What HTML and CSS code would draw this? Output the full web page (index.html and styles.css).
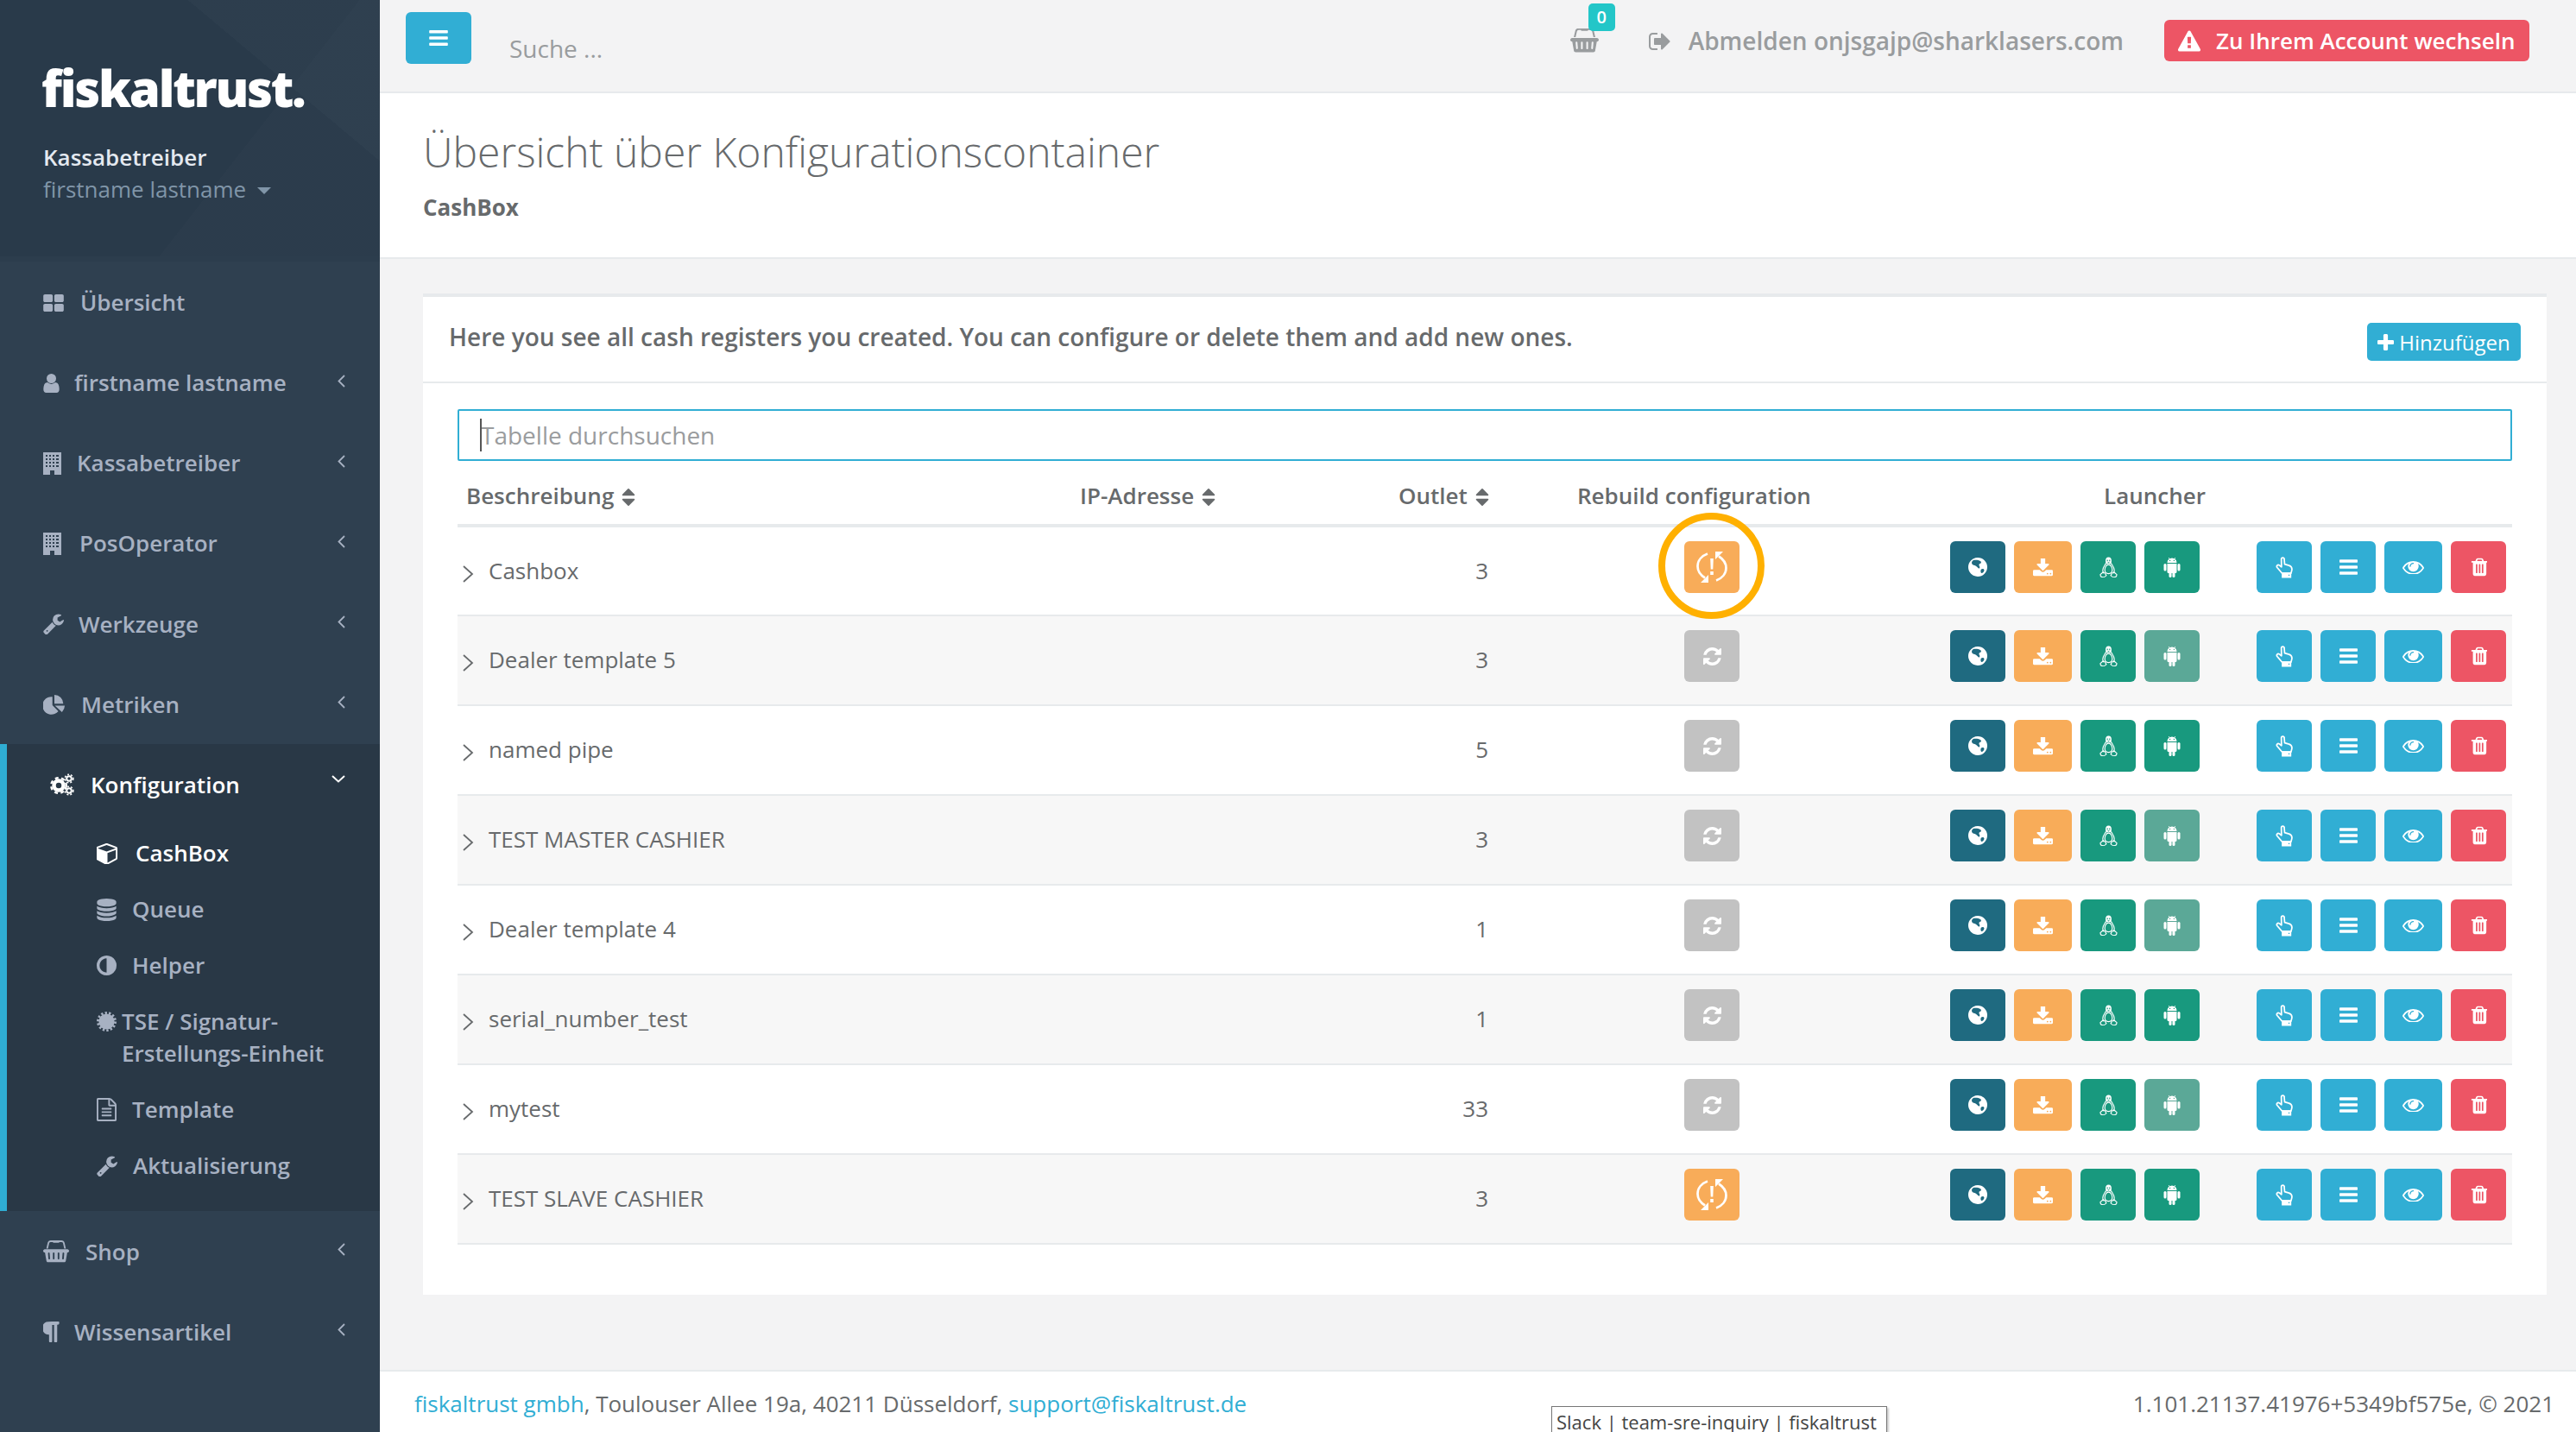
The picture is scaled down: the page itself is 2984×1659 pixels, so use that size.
FILE: index.html
```html
<!DOCTYPE html>
<html lang="de">

<head>
    <meta charset="UTF-8">
    <title>fiskaltrust Portal</title>
    <link rel="stylesheet" href="styles.css">
</head>

<body>
    <!-- icon sprite -->
    <svg class="sprite" xmlns="http://www.w3.org/2000/svg">
        <symbol id="i-th" viewBox="64 128 1664 1408"><path d="M832 1024v384q0 52-38 90t-90 38h-512q-52 0-90-38t-38-90v-384q0-52 38-90t90-38h512q52 0 90 38t38 90zm0-768v384q0 52-38 90t-90 38h-512q-52 0-90-38t-38-90v-384q0-52 38-90t90-38h512q52 0 90 38t38 90zm896 768v384q0 52-38 90t-90 38h-512q-52 0-90-38t-38-90v-384q0-52 38-90t90-38h512q52 0 90 38t38 90zm0-768v384q0 52-38 90t-90 38h-512q-52 0-90-38t-38-90v-384q0-52 38-90t90-38h512q52 0 90 38t38 90z"/></symbol>
        <symbol id="i-user" viewBox="256 128 1280 1536"><path d="M1536 1399q0 109-62.500 187t-150.500 78h-854q-88 0-150.500-78t-62.500-187q0-85 8.500-160.500t31.500-152 58.500-131 94-89 134.500-34.500q131 128 313 128t313-128q76 0 134.500 34.500t94 89 58.500 131 31.500 152 8.500 160.500zm-256-887q0 159-112.500 271.500t-271.500 112.500-271.500-112.500-112.500-271.500 112.500-271.500 271.500-112.500 271.500 112.500 112.500 271.500z"/></symbol>
        <symbol id="i-building" viewBox="0 0 21 26"><path fill-rule="evenodd" d="M0 0h21v26H0zM3 3v2h2V3zm4 0v2h2V3zm4 0v2h2V3zm4 0v2h3V3zM3 7v2h2V7zm4 0v2h2V7zm4 0v2h2V7zm4 0v2h3V7zM3 11v2h2v-2zm4 0v2h2v-2zm4 0v2h2v-2zm4 0v2h3v-2zM3 15v2h2v-2zm4 0v2h2v-2zm4 0v2h2v-2zm4 0v2h3v-2zM8 21v5h5v-5z"/></symbol>
        <symbol id="i-wrench" viewBox="64 128 1664 1600"><path d="M448 1472q0-26-19-45t-45-19-45 19-19 45 19 45 45 19 45-19 19-45zm644-420l-682 682q-37 37-90 37-52 0-91-37l-106-108q-38-36-38-90 0-53 38-91l681-681q39 98 114.500 173.500t173.500 114.500zm634-435q0 39-23 106-47 134-164.500 217.500t-258.500 83.500q-185 0-316.500-131.500t-131.500-316.500 131.500-316.500 316.500-131.500q58 0 121.500 16.500t107.500 46.500q16 11 16 28t-16 28l-293 169v224l193 107q5-3 79-48.500t135.500-81 70.500-35.500q15 0 23.500 10t8.500 25z"/></symbol>
        <symbol id="i-pie" viewBox="0 0 25 23"><path d="M10.700 2.300v9.700l6.900 6.900A10.300 10.300 0 1 1 10.700 2.300zM13 0a10.300 10.300 0 0 1 10.300 10.300H13zM13.600 12.600H25a10.300 10.300 0 0 1-3.200 7.300z"/></symbol>
        <symbol id="i-cogs" viewBox="0 0 28 26">
            <circle cx="10" cy="14" r="5.500" fill="none" stroke="currentColor" stroke-width="4.500"/>
            <circle cx="10" cy="14" r="8.800" fill="none" stroke="currentColor" stroke-width="2.400" stroke-dasharray="4 3.380"/>
            <circle cx="22" cy="6" r="2.800" fill="none" stroke="currentColor" stroke-width="2"/>
            <circle cx="22" cy="6" r="4.800" fill="none" stroke="currentColor" stroke-width="1.600" stroke-dasharray="2 2.020"/>
            <circle cx="22" cy="20" r="2.800" fill="none" stroke="currentColor" stroke-width="2"/>
            <circle cx="22" cy="20" r="4.800" fill="none" stroke="currentColor" stroke-width="1.600" stroke-dasharray="2 2.020"/>
        </symbol>
        <symbol id="i-cube" viewBox="64 64 1664 1664"><path d="M896 1629l640-349v-636l-640 233v752zm-64-865l698-254-698-254-698 254zm832-252v768q0 35-18 65t-49 47l-704 384q-28 16-61 16t-61-16l-704-384q-31-17-49-47t-18-65v-768q0-40 23-73t61-47l704-256q22-8 44-8t44 8l704 256q38 14 61 47t23 73z"/></symbol>
        <symbol id="i-db" viewBox="128 0 1536 1792"><path d="M896 768q237 0 443-43t325-127v170q0 69-103 128t-280 93.500-385 34.500-385-34.500-280-93.500-103-128v-170q119 84 325 127t443 43zm0 768q237 0 443-43t325-127v170q0 69-103 128t-280 93.500-385 34.500-385-34.500-280-93.500-103-128v-170q119 84 325 127t443 43zm0-384q237 0 443-43t325-127v170q0 69-103 128t-280 93.500-385 34.500-385-34.500-280-93.500-103-128v-170q119 84 325 127t443 43zm0-1152q208 0 385 34.500t280 93.500 103 128v128q0 69-103 128t-280 93.500-385 34.500-385-34.500-280-93.500-103-128v-128q0-69 103-128t280-93.500 385-34.500z"/></symbol>
        <symbol id="i-adjust" viewBox="0 0 1536 1536"><path d="M768 1312v-1088q-148 0-273 73t-198 198-73 273 73 273 198 198 273 73zm768-544q0 209-103 385.500t-279.500 279.500-385.500 103-385.500-103-279.500-279.500-103-385.500 103-385.500 279.500-279.500 385.500-103 385.500 103 279.500 279.500 103 385.500z"/></symbol>
        <symbol id="i-cert" viewBox="0 0 24 24">
            <circle cx="12" cy="12" r="9.500"/>
            <circle cx="12" cy="12" r="10.500" fill="none" stroke="currentColor" stroke-width="3" stroke-dasharray="2.500 2.210"/>
        </symbol>
        <symbol id="i-file" viewBox="128 0 1536 1792"><path d="M1596 380q28 28 48 76t20 88v1152q0 40-28 68t-68 28h-1344q-40 0-68-28t-28-68v-1600q0-40 28-68t68-28h896q40 0 88 20t76 48zm-444-244v376h376q-10-29-22-41l-313-313q-12-12-41-22zm384 1528v-1024h-416q-40 0-68-28t-28-68v-416h-768v1536h1280zm-1024-864q0-14 9-23t23-9h704q14 0 23 9t9 23v64q0 14-9 23t-23 9h-704q-14 0-23-9t-9-23v-64zm736 224q14 0 23 9t9 23v64q0 14-9 23t-23 9h-704q-14 0-23-9t-9-23v-64q0-14 9-23t23-9h704zm0 256q14 0 23 9t9 23v64q0 14-9 23t-23 9h-704q-14 0-23-9t-9-23v-64q0-14 9-23t23-9h704z"/></symbol>
        <symbol id="i-basket" viewBox="0 100 2048 1700"><path d="M1920 768q53 0 90.500 37.500t37.500 90.500-37.500 90.500-90.500 37.500h-15l-115 662q-8 46-44 76t-82 30h-1280q-46 0-82-30t-44-76l-115-662h-15q-53 0-90.500-37.500t-37.500-90.500 37.500-90.500 90.500-37.500h1792zm-1435 800q26-2 43.500-22.500t15.500-46.500l-32-416q-2-26-22.500-43.500t-46.500-15.500-43.500 22.500-15.500 46.500l32 416q2 25 20.500 42t43.500 17h5zm411-64v-416q0-26-19-45t-45-19-45 19-19 45v416q0 26 19 45t45 19 45-19 19-45zm384 0v-416q0-26-19-45t-45-19-45 19-19 45v416q0 26 19 45t45 19 45-19 19-45zm352 5l32-416q2-26-15.500-46.500t-43.500-22.500-46.500 15.500-22.500 43.500l-32 416q-2 26 15.500 46.500t43.500 22.500h5q25 0 43.500-17t20.500-42zm-1156-1217l-93 412h-132l101-441q19-88 89-143.500t160-55.500h167q0-26 19-45t45-19h384q26 0 45 19t19 45h167q90 0 160 55.500t89 143.500l101 441h-132l-93-412q-11-44-45.500-72t-79.500-28h-167q0 26-19 45t-45 19h-384q-26 0-45-19t-19-45h-167q-45 0-79.500 28t-45.500 72z"/></symbol>
        <symbol id="i-para" viewBox="370 128 1164 1536"><path d="M1534 189v73q0 29-18.500 61t-42.500 32q-50 0-54 1-26 6-32 31-3 11-3 64v1152q0 25-18 43t-43 18h-108q-25 0-43-18t-18-43v-1218h-143v1218q0 25-17.500 43t-43.500 18h-108q-26 0-43.500-18t-17.500-43v-496q-147-12-245-59-126-58-192-179-64-117-64-259 0-166 88-286 88-118 209-159 111-37 417-37h479q25 0 43 18t18 43z"/></symbol>
        <symbol id="i-bars" viewBox="128 256 1536 1280"><path d="M1664 1344v128q0 26-19 45t-45 19h-1408q-26 0-45-19t-19-45v-128q0-26 19-45t45-19h1408q26 0 45 19t19 45zm0-512v128q0 26-19 45t-45 19h-1408q-26 0-45-19t-19-45v-128q0-26 19-45t45-19h1408q26 0 45 19t19 45zm0-512v128q0 26-19 45t-45 19h-1408q-26 0-45-19t-19-45v-128q0-26 19-45t45-19h1408q26 0 45 19t19 45z"/></symbol>
        <symbol id="i-plus" viewBox="192 128 1408 1408"><path d="M1600 736v192q0 40-28 68t-68 28h-416v416q0 40-28 68t-68 28h-192q-40 0-68-28t-28-68v-416h-416q-40 0-68-28t-28-68v-192q0-40 28-68t68-28h416v-416q0-40 28-68t68-28h192q40 0 68 28t28 68v416h416q40 0 68 28t28 68z"/></symbol>
        <symbol id="i-trash" viewBox="128 128 1408 1536"><path d="M704 1376v-704q0-14-9-23t-23-9h-64q-14 0-23 9t-9 23v704q0 14 9 23t23 9h64q14 0 23-9t9-23zm256 0v-704q0-14-9-23t-23-9h-64q-14 0-23 9t-9 23v704q0 14 9 23t23 9h64q14 0 23-9t9-23zm256 0v-704q0-14-9-23t-23-9h-64q-14 0-23 9t-9 23v704q0 14 9 23t23 9h64q14 0 23-9t9-23zm-544-992h448l-48-117q-7-9-17-11h-317q-10 2-17 11zm928 32v64q0 14-9 23t-23 9h-96v948q0 83-47 143.500t-113 60.500h-832q-66 0-113-58.500t-47-141.500v-952h-96q-14 0-23-9t-9-23v-64q0-14 9-23t23-9h309l70-167q15-37 54-63t79-26h320q40 0 79 26t54 63l70 167h309q14 0 23 9t9 23z"/></symbol>
        <symbol id="i-refresh" viewBox="128 128 1536 1536"><path d="M1639 1056q0 5-1 7-64 268-268 434.500t-478 166.500q-146 0-282.500-55t-243.500-157l-129 129q-19 19-45 19t-45-19-19-45v-448q0-26 19-45t45-19h448q26 0 45 19t19 45-19 45l-137 137q71 66 161 102t187 36q134 0 250-65t186-179q11-17 53-117 8-23 30-23h192q13 0 22.500 9.500t9.500 22.500zm25-800v448q0 26-19 45t-45 19h-448q-26 0-45-19t-19-45 19-45l138-138q-148-137-349-137-134 0-250 65t-186 179q-11 17-53 117-8 23-30 23h-199q-13 0-22.500-9.500t-9.500-22.500v-7q65-268 270-434.500t480-166.500q146 0 284 55.500t245 156.500l130-129q19-19 45-19t45 19 19 45z"/></symbol>
        <symbol id="i-eye" viewBox="0 320 1792 1152"><path d="M1664 960q-152-236-381-353 61 104 61 225 0 185-131.500 316.500t-316.500 131.500-316.500-131.500-131.500-316.500q0-121 61-225-229 117-381 353 133 205 333.500 326.500t434.500 121.500 434.500-121.500 333.500-326.500zm-720-384q0-20-14-34t-34-14q-125 0-214.500 89.500t-89.500 214.500q0 20 14 34t34 14 34-14 14-34q0-86 61-147t147-61q20 0 34-14t14-34zm848 384q0 34-20 69-140 230-376.500 368.500t-499.500 138.500-499.500-139-376.500-368q-20-35-20-69t20-69q140-229 376.500-368t499.500-139 499.500 139 376.500 368q20 35 20 69z"/></symbol>
        <symbol id="i-download" viewBox="64 128 1664 1408"><path d="M1344 1344q0-26-19-45t-45-19-45 19-19 45 19 45 45 19 45-19 19-45zm256 0q0-26-19-45t-45-19-45 19-19 45 19 45 45 19 45-19 19-45zm128-224v320q0 40-28 68t-68 28h-1472q-40 0-68-28t-28-68v-320q0-40 28-68t68-28h465l135 136q58 56 136 56t136-56l136-136h464q40 0 68 28t28 68zm-325-569q17 41-14 70l-448 448q-18 19-45 19t-45-19l-448-448q-31-29-14-70 17-39 59-39h256v-448q0-26 19-45t45-19h256q26 0 45 19t19 45v448h256q42 0 59 39z"/></symbol>
        <symbol id="i-warning" viewBox="0 0 1792 1664"><path d="M1024 1375v-190q0-14-9.500-23.500t-22.500-9.500h-192q-13 0-22.500 9.500t-9.500 23.500v190q0 14 9.500 23.500t22.500 9.500h192q13 0 22.500-9.500t9.500-23.500zm-2-374l18-459q0-12-10-19-13-11-24-11h-220q-11 0-24 11-10 7-10 21l17 457q0 10 10 16.500t24 6.500h185q14 0 23.500-6.500t10.500-16.500zm-14-934l768 1408q35 63-2 126-17 29-46.500 46t-63.500 17h-1536q-34 0-63.500-17t-46.500-46q-37-63-2-126l768-1408q17-31 47-49t65-18 65 18 47 49z"/></symbol>
        <symbol id="i-sort" viewBox="384 192 1024 1408"><path d="M1408 1088q0 26-19 45l-448 448q-19 19-45 19t-45-19l-448-448q-19-19-19-45t19-45 45-19h896q26 0 45 19t19 45zm0-384q0 26-19 45t-45 19h-896q-26 0-45-19t-19-45 19-45l448-448q19-19 45-19t45 19l448 448q19 19 19 45z"/></symbol>
        <symbol id="i-signout" viewBox="64 192 1600 1408"><path d="M704 1440q0 4 1 20t.5 26.500-3 23.500-10 19.500-20.500 6.500h-320q-119 0-203.500-84.500t-84.500-203.500v-704q0-119 84.500-203.500t203.500-84.500h320q13 0 22.500 9.500t9.500 22.500q0 4 1 20t.5 26.500-3 23.500-10 19.500-20.500 6.500h-320q-66 0-113 47t-47 113v704q0 66 47 113t113 47h312l11.500 1 11.500 3 8 5.500 7 9 2 13.500zm928-544q0 26-19 45l-544 544q-19 19-45 19t-45-19-19-45v-288h-448q-26 0-45-19t-19-45v-384q0-26 19-45t45-19h448v-288q0-26 19-45t45-19 45 19l544 544q19 19 19 45z"/></symbol>
        <symbol id="i-globe" viewBox="0 0 22 22"><path fill-rule="evenodd" d="M11 0a11 11 0 1 0 0 22 11 11 0 0 0 0-22zM6 3c2-.6 6-.4 8 1 1.500 1 1 2.500-.5 3-1 .4-1.500 1.500-.5 3 .8 1.300 0 3-1 2.500-1-.8-2.500-2.500-4.500-3.500C6 9 4 8 4 6c0-1.500 1-2.500 2-3zm9 10.500c1.500-1 3.500-.5 3.500 1 0 1.800-2 3.500-3 3.500-1.200 0-1.500-3.500-.5-4.500z"/></symbol>
        <symbol id="i-linux" viewBox="0 0 22 26">
            <path fill-rule="evenodd" d="M11 .5c-2.600 0-3.600 2-3.600 4.300 0 1.500.3 2.500.3 3.700h6.600c0-1.200.3-2.200.3-3.700C14.600 2.500 13.600.5 11 .5zM9 3.500h1.200v1.800H9zM11.800 3.500H13v1.800h-1.200zM9.500 6.500h3L11 7.800z"/>
            <g fill="none" stroke="currentColor" stroke-width="1.200">
                <path d="M7.700 8C7 10 4 12.500 4 16.500c0 1.500.5 2.500 1 3.500M14.300 8c.7 2 3.700 4.500 3.700 8.500 0 1.500-.5 2.500-1 3.500"/>
                <path d="M11 9.500c-3 0-4.500 3.500-4.500 6.500 0 2.500 1.500 4.500 4.500 4.500s4.500-2 4.500-4.500c0-3-1.500-6.500-4.500-6.500z"/>
                <path d="M1 21.500l3.500-3c1.500.5 3 2 3.800 4.200-1.500 2-4.500 2.500-6.800 1zM21 21.500l-3.500-3c-1.500.5-3 2-3.800 4.200 1.500 2 4.500 2.500 6.800 1z"/>
            </g>
        </symbol>
        <symbol id="i-android" viewBox="0 0 20 24">
            <path fill-rule="evenodd" d="M4.500 7a5.500 5.500 0 0 1 11 0zM7 3.700v1.200h1.200V3.700zm4.800 0v1.200H13V3.700z"/>
            <path d="M6.200 1l1.600 2.500M13.800 1l-1.600 2.500" stroke="currentColor" stroke-width=".8"/>
            <path d="M4.500 8h11v9.500a1.500 1.500 0 0 1-1.500 1.500H6a1.500 1.500 0 0 1-1.500-1.500z"/>
            <rect x="0.500" y="8" width="3" height="8.500" rx="1.500"/>
            <rect x="16.500" y="8" width="3" height="8.500" rx="1.500"/>
            <rect x="6.500" y="17" width="3" height="7" rx="1.500"/>
            <rect x="10.500" y="17" width="3" height="7" rx="1.500"/>
        </symbol>
        <symbol id="i-hand" viewBox="0 0 21 26">
            <path fill="none" stroke="currentColor" stroke-width="1.800" stroke-linejoin="round" d="M6.500 3c0-2.600 3.500-2.600 3.500 0l.5 6 5.300 1.500c2.700.9 3.500 2.500 3.500 4.500 0 1.500-.6 3-1.200 5H7.500L1.500 13c-1.400-1.800.6-4 2.400-2.800l2.800 2z"/>
            <path fill-rule="evenodd" d="M7 19h11.500v6.500H7zM15 21.500v1.500h1.500v-1.500z"/>
        </symbol>
        <symbol id="i-sync-alert" viewBox="0 0 36 36">
            <path fill="none" stroke="currentColor" stroke-width="2.700" d="M13 2.500C6 5 1.500 10.500 1.500 17c0 5 3 10 8.500 13.500M23 33.500C30 31 34.500 25.500 34.500 19c0-5-3-10-8.500-13.500"/>
            <path d="M5 36h9v-9zM31 0h-9v9z"/>
            <path d="M16.200 8h3.600l-.5 12.500h-2.600zM16.200 23h3.600v4h-3.600z"/>
        </symbol>
    </svg>

    <div class="app">
        <aside class="sidebar">
            <div class="nav-header">
                <div class="logo">fiskaltrust.</div>
                <div class="role">Kassabetreiber</div>
                <div class="account">firstname lastname <span class="caret"></span></div>
            </div>

            <ul class="nav">
                <li class="nav-item"><svg width="24" height="20"><use href="#i-th"/></svg><span>Übersicht</span></li>
                <li class="nav-item"><svg class="tight" width="19" height="22"><use href="#i-user"/></svg><span>firstname lastname</span><svg class="chev" viewBox="0 0 9 15"><path d="M8 1L1.500 7.500 8 14"/></svg></li>
                <li class="nav-item"><svg class="snug" width="21" height="26"><use href="#i-building"/></svg><span>Kassabetreiber</span><svg class="chev" viewBox="0 0 9 15"><path d="M8 1L1.500 7.500 8 14"/></svg></li>
                <li class="nav-item"><svg class="wide" width="21" height="26"><use href="#i-building"/></svg><span>PosOperator</span><svg class="chev" viewBox="0 0 9 15"><path d="M8 1L1.500 7.500 8 14"/></svg></li>
                <li class="nav-item"><svg class="tight" width="24" height="24"><use href="#i-wrench"/></svg><span>Werkzeuge</span><svg class="chev" viewBox="0 0 9 15"><path d="M8 1L1.500 7.500 8 14"/></svg></li>
                <li class="nav-item"><svg width="25" height="23"><use href="#i-pie"/></svg><span>Metriken</span><svg class="chev" viewBox="0 0 9 15"><path d="M8 1L1.500 7.500 8 14"/></svg></li>

                <li class="nav-group">
                    <div class="nav-item active"><svg width="28" height="26"><use href="#i-cogs"/></svg><span>Konfiguration</span><svg class="chev-down" viewBox="0 0 16 9"><path d="M1 1l7 6.500L15 1"/></svg></div>
                    <ul class="subnav">
                        <li class="sub-item active"><svg width="25" height="25"><use href="#i-cube"/></svg><span>CashBox</span></li>
                        <li class="sub-item"><svg width="23" height="26"><use href="#i-db"/></svg><span>Queue</span></li>
                        <li class="sub-item"><svg width="23" height="23"><use href="#i-adjust"/></svg><span>Helper</span></li>
                        <li class="sub-item multi"><svg class="cert" width="23" height="23"><use href="#i-cert"/></svg><span>TSE / Signatur-<br>Erstellungs-Einheit</span></li>
                        <li class="sub-item"><svg width="23" height="27"><use href="#i-file"/></svg><span>Template</span></li>
                        <li class="sub-item"><svg width="24" height="24"><use href="#i-wrench"/></svg><span>Aktualisierung</span></li>
                    </ul>
                </li>

                <li class="nav-item"><svg width="30" height="26"><use href="#i-basket"/></svg><span>Shop</span><svg class="chev" viewBox="0 0 9 15"><path d="M8 1L1.500 7.500 8 14"/></svg></li>
                <li class="nav-item"><svg class="tight" width="19" height="24"><use href="#i-para"/></svg><span>Wissensartikel</span><svg class="chev" viewBox="0 0 9 15"><path d="M8 1L1.500 7.500 8 14"/></svg></li>
            </ul>
        </aside>

        <div class="main">
            <header class="topbar">
                <div class="topbar-left">
                    <button class="menu-btn"><svg width="22" height="18"><use href="#i-bars"/></svg></button>
                    <span class="search">Suche ...</span>
                </div>
                <div class="topbar-right">
                    <div class="cart">
                        <svg width="33" height="28"><use href="#i-basket"/></svg>
                        <span class="cart-badge">0</span>
                    </div>
                    <span class="logout"><svg width="25" height="22"><use href="#i-signout"/></svg>Abmelden onjsgajp@sharklasers.com</span>
                    <button class="switch-btn"><svg width="26" height="25"><use href="#i-warning"/></svg>Zu Ihrem Account wechseln</button>
                </div>
            </header>

            <section class="page-title">
                <h2>Übersicht über Konfigurationscontainer</h2>
                <strong>CashBox</strong>
            </section>

            <div class="content">
                <div class="box">
                    <div class="box-title">
                        <span>Here you see all cash registers you created. You can configure or delete them and add new ones.</span>
                        <button class="add-btn"><svg width="19" height="19"><use href="#i-plus"/></svg>Hinzufügen</button>
                    </div>
                    <div class="box-body">
                        <div class="filter">
                            <input type="text" placeholder="Tabelle durchsuchen">
                            <span class="text-caret"></span>
                        </div>

                        <table class="grid">
                            <colgroup>
                                <col class="col-name"><col class="col-ip"><col class="col-outlet"><col class="col-rebuild"><col class="col-launcher"><col class="col-actions">
                            </colgroup>
                            <thead>
                                <tr>
                                    <th>Beschreibung <svg class="sort"><use href="#i-sort"/></svg></th>
                                    <th>IP-Adresse <svg class="sort"><use href="#i-sort"/></svg></th>
                                    <th class="th-outlet">Outlet <svg class="sort"><use href="#i-sort"/></svg></th>
                                    <th class="th-rebuild">Rebuild configuration</th>
                                    <th class="th-launcher">Launcher</th>
                                    <th></th>
                                </tr>
                            </thead>
                            <tbody id="rows"></tbody>
                        </table>
                    </div>
                </div>
            </div>

            <footer class="footer">
                <span><a>fiskaltrust gmbh</a>, Toulouser Allee 19a, 40211 Düsseldorf, <a>support@fiskaltrust.de</a></span>
                <span>1.101.21137.41976+5349bf575e, © 2021</span>
            </footer>
        </div>
    </div>

    <div class="tooltip">Slack | team-sre-inquiry | fiskaltrust</div>

    <script>
        // name, outlet, needs rebuild, android enabled
        var cashboxes = [
            ["Cashbox", 3, true, true],
            ["Dealer template 5", 3, false, false],
            ["named pipe", 5, false, true],
            ["TEST MASTER CASHIER", 3, false, false],
            ["Dealer template 4", 1, false, false],
            ["serial_number_test", 1, false, true],
            ["mytest", 33, false, false],
            ["TEST SLAVE CASHIER", 3, true, true]
        ];

        function icon(name, w, h) {
            return '<svg width="' + w + '" height="' + h + '"><use href="#' + name + '"/></svg>';
        }

        var html = "";
        for (var i = 0; i < cashboxes.length; i++) {
            var c = cashboxes[i];
            html += '<tr>';
            html += '<td class="td-name"><svg class="row-chev" viewBox="0 0 14 20"><path d="M2 1l10 9-10 9"/></svg>' + c[0] + '</td>';
            html += '<td></td>';
            html += '<td class="td-outlet">' + c[1] + '</td>';
            html += '<td class="td-rebuild">';
            if (c[2]) {
                html += '<button class="btn btn-rebuild alert">' + icon("i-sync-alert", 36, 36) + '</button>';
            } else {
                html += '<button class="btn btn-rebuild idle">' + icon("i-refresh", 21, 21) + '</button>';
            }
            html += '</td>';
            html += '<td class="td-launcher"><div class="btn-row">';
            html += '<button class="btn teal">' + icon("i-globe", 22, 22) + '</button>';
            html += '<button class="btn orange wide-btn">' + icon("i-download", 23, 21) + '</button>';
            html += '<button class="btn green">' + icon("i-linux", 21, 25) + '</button>';
            html += '<button class="btn green' + (c[3] ? '' : ' faded') + '">' + icon("i-android", 20, 24) + '</button>';
            html += '</div></td>';
            html += '<td class="td-actions"><div class="btn-row">';
            html += '<button class="btn blue">' + icon("i-hand", 21, 25) + '</button>';
            html += '<button class="btn blue">' + icon("i-bars", 21, 18) + '</button>';
            html += '<button class="btn blue wide-btn">' + icon("i-eye", 25, 16) + '</button>';
            html += '<button class="btn red">' + icon("i-trash", 19, 22) + '</button>';
            html += '</div></td>';
            html += '</tr>';
        }
        document.getElementById("rows").innerHTML = html;
    </script>
    <div class="ring"></div>
</body>

</html>
```

FILE: styles.css
```css
* {
    box-sizing: border-box;
}

html, body {
    margin: 0;
    height: 100%;
    overflow: hidden;
}

body {
    font-family: "Open Sans", "Liberation Sans", sans-serif;
    font-size: 26px;
    line-height: 37px;
    color: #676a6c;
    background-color: #2f4050;
}

svg {
    fill: currentColor;
    flex: none;
}

button {
    border: 0;
    font-family: inherit;
    padding: 0;
}

ul {
    list-style: none;
    margin: 0;
    padding: 0;
}

.sprite {
    display: none;
}

.app {
    display: flex;
    height: 1659px;
}

/* Sidebar */
.sidebar {
    width: 440px;
    flex: none;
    background-color: #2f4050;
}

.nav-header {
    height: 303px;
    padding: 65px 0 0 48px;
    background:
        linear-gradient(128deg, transparent 62%, rgba(255, 255, 255, 0.012) 62%),
        linear-gradient(40deg, transparent 72%, rgba(255, 255, 255, 0.018) 72%),
        #293a4a;
    border-bottom: 6px solid #2c3d4d;
}

.logo {
    font-size: 58px;
    font-weight: 800;
    line-height: 74px;
    letter-spacing: -2.300px;
    color: #ffffff;
}

.role {
    margin: 25px 0 0 2px;
    font-weight: 600;
    color: #e4e9f0;
}

.account {
    margin-left: 2px;
    color: #8095a8;
    line-height: 37px;
}

.caret {
    display: inline-block;
    margin: 0 0 4px 6px;
    border-top: 8px solid #8095a8;
    border-left: 8px solid transparent;
    border-right: 8px solid transparent;
}

.nav-item {
    display: flex;
    align-items: center;
    height: 93.140px;
    padding: 2px 40px 0 50px;
    font-weight: 600;
    color: #a7b1c2;
}

.nav-item svg:first-child {
    margin-right: 19px;
}

.nav-item svg.tight {
    margin-right: 17px;
}

.nav-item svg.snug {
    margin-right: 18px;
}

.nav-item svg.wide {
    margin-right: 21px;
}

.chev {
    width: 9px;
    height: 15px;
    margin: 0 0 5px auto;
    fill: none;
    stroke: #a7b1c2;
    stroke-width: 1.800;
}

.chev-down {
    width: 16px;
    height: 9px;
    margin: 0 0 14px auto;
    fill: none;
    stroke: #ffffff;
    stroke-width: 2;
}

.nav-group {
    height: 541px;
    background-color: #293846;
    border-left: 8px solid #2fadd3;
}

.nav-item.active {
    color: #ffffff;
}

.nav-item.active svg:first-child {
    margin-right: 19px;
}

.sub-item {
    display: flex;
    align-items: center;
    height: 65.140px;
    padding: 2px 0 0 104px;
    font-weight: 600;
    color: #a7b1c2;
}

.sub-item svg {
    margin-right: 18px;
}

.sub-item.active {
    color: #ffffff;
}

.sub-item.active svg {
    margin-right: 20px;
}

.sub-item.multi {
    height: 102px;
    align-items: flex-start;
    padding-top: 15px;
}

.sub-item svg.cert {
    margin: 7px 6px 0 0;
}

/* Main column */
.main {
    flex: 1;
    display: flex;
    flex-direction: column;
    min-width: 0;
    background-color: #f3f3f4;
}

.topbar {
    height: 108px;
    flex: none;
    display: flex;
    justify-content: space-between;
    padding: 14px 54px 0 30px;
    border-bottom: 2px solid #e7eaec;
}

.topbar-left {
    display: flex;
}

.menu-btn {
    display: flex;
    align-items: center;
    justify-content: center;
    width: 76px;
    height: 60px;
    color: #ffffff;
    background-color: #31aed4;
    border-radius: 6px;
}

.search {
    margin: 24px 0 0 44px;
    font-size: 28px;
    color: #999c9e;
}

.topbar-right {
    display: flex;
    align-items: flex-start;
}

.cart {
    position: relative;
    margin: 19px 58px 0 0;
    color: #999c9e;
}

.cart-badge {
    position: absolute;
    left: 21px;
    top: -29px;
    width: 31px;
    height: 32px;
    font-size: 20px;
    line-height: 32px;
    font-weight: 600;
    text-align: center;
    color: #ffffff;
    background-color: #23c6c8;
    border-radius: 5px;
}

.logout {
    display: flex;
    align-items: center;
    gap: 21px;
    margin: 15px 47px 0 0;
    font-size: 28px;
    color: #999c9e;
    font-weight: 600;
    white-space: nowrap;
}

.switch-btn {
    display: flex;
    align-items: center;
    gap: 18px;
    width: 423px;
    height: 48px;
    margin-top: 9px;
    padding-left: 16px;
    font-size: 26px;
    font-weight: 600;
    color: #ffffff;
    background-color: #ed5565;
    border-radius: 6px;
    white-space: nowrap;
}

.page-title {
    height: 192px;
    flex: none;
    padding: 38px 0 0 50px;
    background-color: #ffffff;
    border-bottom: 2px solid #e7eaec;
}

.page-title h2 {
    margin: 0 0 16px;
    font-size: 48px;
    font-weight: 300;
    line-height: 60px;
}

.page-title strong {
    font-weight: 700;
    display: block;
}

.content {
    flex: 1;
    padding: 40px 34px 0 50px;
}

.box {
    height: 1160px;
    background-color: #ffffff;
    border-top: 4px solid #e7eaec;
}

.box-title {
    position: relative;
    height: 100px;
    padding: 28px 0 0 30px;
    font-size: 28px;
    font-weight: 600;
    border-bottom: 2px solid #e7eaec;
}

.add-btn {
    position: absolute;
    top: 30px;
    right: 30px;
    display: flex;
    align-items: center;
    justify-content: center;
    gap: 6px;
    width: 178px;
    height: 44px;
    font-size: 24px;
    color: #ffffff;
    background-color: #31aed4;
    border-radius: 5px;
}

.box-body {
    padding: 30px 40px 0 40px;
}

.filter {
    position: relative;
}

.filter input {
    display: block;
    width: 100%;
    height: 60px;
    padding: 0 24px 0 25px;
    font-family: inherit;
    font-size: 28px;
    color: #676a6c;
    background-color: #ffffff;
    border: 2px solid #31aed4;
    border-radius: 2px;
    outline: none;
}

.filter input::placeholder {
    color: #9a9c9e;
    opacity: 1;
}

.text-caret {
    position: absolute;
    left: 26px;
    top: 11px;
    width: 1.500px;
    height: 38px;
    background-color: #555555;
}

/* Table */
.grid {
    width: 2380px;
    margin-top: 3px;
    table-layout: fixed;
    border-collapse: collapse;
}

.col-name { width: 711px; }
.col-ip { width: 369px; }
.col-outlet { width: 207px; }
.col-rebuild { width: 383px; }
.col-launcher { width: 390px; }
.col-actions { width: 320px; }

.grid th {
    height: 72px;
    padding: 4px 0 0 10px;
    font-weight: 600;
    text-align: left;
    white-space: nowrap;
    border-bottom: 4px solid #e7eaec;
}

.grid th.th-launcher { padding-left: 237px; }

.sort {
    width: 16px;
    height: 20px;
    margin-left: 2px;
    vertical-align: -2px;
}

.grid td {
    height: 104px;
    padding: 0;
    vertical-align: top;
    border-bottom: 2px solid #e7eaec;
}

.grid tbody tr:nth-child(even) {
    background-color: #f7f7f7;
}

.grid td.td-name {
    padding-top: 32px;
    white-space: nowrap;
}

.row-chev {
    width: 14px;
    height: 20px;
    margin: 0 17px 0 5px;
    vertical-align: -4px;
    fill: none;
    stroke: #676a6c;
    stroke-width: 1.800;
}

.grid td.td-outlet {
    padding: 32px 93px 0 0;
    text-align: right;
}

.grid td.td-rebuild { padding: 16px 0 0 134px; }
.grid td.td-launcher { padding: 16px 0 0 59px; }
.grid td.td-actions { padding: 16px 0 0 24px; }

.btn-row {
    display: flex;
    gap: 10px;
}

.btn {
    display: flex;
    align-items: center;
    justify-content: center;
    width: 64px;
    height: 60px;
    color: #ffffff;
    border-radius: 6px;
}

.btn.wide-btn { width: 67px; }
.btn.teal { background-color: #1f6a80; }
.btn.orange { background-color: #f8ac59; }
.btn.green { background-color: #18997e; }
.btn.faded { background-color: #5ba897; }
.btn.blue { background-color: #31aed4; }
.btn.red { background-color: #ed5565; }
.btn.idle { background-color: #c2c2c2; }
.btn.alert { background-color: #f8ac59; }

/* Highlight drawn over the first rebuild button */
.ring {
    position: absolute;
    left: 1921px;
    top: 594px;
    width: 123px;
    height: 123px;
    border: 8px solid #ffb000;
    border-radius: 50%;
}

.footer {
    height: 72px;
    flex: none;
    display: flex;
    justify-content: space-between;
    padding: 19px 25px 0 40px;
    background-color: #ffffff;
    border-top: 2px solid #e7eaec;
}

.footer a {
    color: #31aed4;
}

.tooltip {
    position: absolute;
    left: 1797px;
    top: 1629px;
    width: 389px;
    height: 30px;
    padding: 4px 0 0 5px;
    font-size: 22px;
    line-height: 26px;
    white-space: nowrap;
    color: #444444;
    background-color: #ffffff;
    border: 1px solid #767676;
    border-bottom: 0;
    box-shadow: 2px 2px 2px rgba(0, 0, 0, 0.2);
}
```
